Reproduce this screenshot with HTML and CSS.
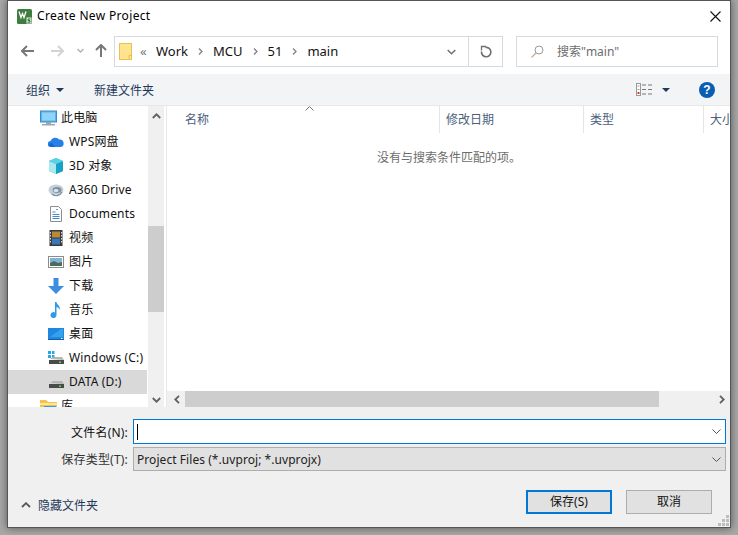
FILE: index.html
```html
<!DOCTYPE html>
<html lang="zh">
<head>
<meta charset="utf-8">
<title>Create New Project</title>
<link rel="stylesheet" href="styles.css">
</head>
<body>
<div class="window">
  <header class="titlebar">
    <svg class="app-icon" width="15" height="15" viewBox="0 0 15 15"><rect width="15" height="15" rx="1.5" fill="#3f7d3f"/><path d="M2 2.500l2 6 1.500-4 1.500 4 2-6" fill="none" stroke="#fff" stroke-width="1.3"/><rect x="9.500" y="8.500" width="5" height="6" fill="#e8efe8"/><path d="M13.500 10h-2.500v1.600h2v1.600h-2.400" fill="none" stroke="#2f6b2f"/></svg>
    <span class="title">Create New Project</span>
    <svg class="close" width="11" height="11" viewBox="0 0 11 11"><path d="M.5.5l10 10M10.500.5l-10 10" stroke="#111" stroke-width="1.1"/></svg>
  </header>

  <nav class="navbar">
    <svg class="nav-back" width="13" height="12" viewBox="0 0 13 12"><path d="M6 1L1 6l5 5M1 6h12" fill="none" stroke="#777" stroke-width="2"/></svg>
    <svg class="nav-forward" width="13" height="12" viewBox="0 0 13 12"><path d="M7 1l5 5-5 5M12 6H0" fill="none" stroke="#d4d4d4" stroke-width="2"/></svg>
    <svg class="nav-drop" width="7" height="5" viewBox="0 0 7 5"><path d="M.5 1l3 3 3-3" fill="none" stroke="#b0b0b0" stroke-width="1.3"/></svg>
    <svg class="nav-up" width="12" height="13" viewBox="0 0 12 13"><path d="M1 6l5-5 5 5M6 1v12" fill="none" stroke="#777" stroke-width="2"/></svg>
    <div class="address">
      <svg class="addr-folder" width="13" height="17" viewBox="0 0 13 17"><rect x=".5" y=".5" width="12" height="16" fill="#ffe38f" stroke="#e6c34f"/><path d="M10 16.500v-4h2.500" fill="none" stroke="#e6c34f"/></svg>
      <span class="crumb-more">«</span>
      <span class="crumb">Work</span>
      <svg class="sep" width="5" height="7" viewBox="0 0 5 7"><path d="M1 .5l3 3-3 3" fill="none" stroke="#808080" stroke-width="1.3"/></svg>
      <span class="crumb">MCU</span>
      <svg class="sep" width="5" height="7" viewBox="0 0 5 7"><path d="M1 .5l3 3-3 3" fill="none" stroke="#808080" stroke-width="1.3"/></svg>
      <span class="crumb">51</span>
      <svg class="sep" width="5" height="7" viewBox="0 0 5 7"><path d="M1 .5l3 3-3 3" fill="none" stroke="#808080" stroke-width="1.3"/></svg>
      <span class="crumb">main</span>
      <svg class="addr-drop" width="9" height="6" viewBox="0 0 9 6"><path d="M.7 1l3.800 3.800L8.300 1" fill="none" stroke="#707070" stroke-width="1.5"/></svg>
      <div class="refresh"><svg width="12" height="13" viewBox="0 0 12 13"><path d="M5.500 2.400A4.700 4.700 0 1 1 1.500 6.500" fill="none" stroke="#707070" stroke-width="1.600"/><path d="M1.500 5.500V1.500H6" fill="none" stroke="#707070" stroke-width="1.300"/></svg></div>
    </div>
    <div class="search">
      <svg width="13" height="13" viewBox="0 0 13 13"><circle cx="8" cy="5" r="4" fill="none" stroke="#9a9a9a"/><path d="M5 8l-4.500 4.500" stroke="#c9a88a" stroke-width="1.100"/></svg>
      <span class="search-text">搜索"main"</span>
    </div>
  </nav>

  <div class="toolbar">
    <span class="tool">组织</span>
    <span class="tri tri-org"></span>
    <span class="tool tool-new">新建文件夹</span>
    <svg class="view-icon" width="17" height="13" viewBox="0 0 17 13"><rect x=".5" y=".5" width="4" height="12" fill="#fff" stroke="#9a9a9a"/><path d="M1.500 3h2M1.500 6.500h2" stroke="#9a9a9a"/><rect x="1.500" y="9" width="2" height="2" fill="#d33"/><path d="M6 2h4M12 2h4M6 6.500h4M12 6.500h4M6 11h4M12 11h4" stroke="#777"/></svg>
    <span class="tri tri-view"></span>
    <svg class="help" width="16" height="16" viewBox="0 0 16 16"><circle cx="8" cy="8" r="8" fill="#0a5eb0"/><text x="8" y="12.300" text-anchor="middle" class="help-mark">?</text></svg>
  </div>

  <main class="main">
    <aside class="sidebar">
      <ul class="tree">
        <li class="row">
          <svg width="17" height="16" viewBox="0 0 17 16"><rect x=".5" y="1" width="16" height="11" fill="#58b4ee" stroke="#3d8cc4"/><rect x="2" y="2.500" width="13" height="8" fill="#8fd3f7"/><rect x="6" y="12" width="5" height="2" fill="#9aa8b4"/><rect x="2" y="14" width="13" height="1.500" fill="#9aa8b4"/></svg>
          <span>此电脑</span>
        </li>
        <li class="row child">
          <svg width="16" height="16" viewBox="0 0 16 16"><path d="M3 13a3 3 0 0 1-.500-6A5 5 0 0 1 11 5.500a3.800 3.800 0 0 1 1.500 7.500z" fill="#2680e8"/><path d="M1 11a3 3 0 0 1 3-2l3 4H3z" fill="#1666cc"/></svg>
          <span>WPS网盘</span>
        </li>
        <li class="row child">
          <svg width="16" height="16" viewBox="0 0 16 16"><path d="M8 0l7 3v10l-7 3-7-3V3z" fill="#2fb8d6"/><path d="M1 3l7 3v10l-7-3z" fill="#a8e8ee"/><path d="M8 6l7-3v10l-7 3z" fill="#17a2c4"/><path d="M1 3l7-3 7 3-7 3z" fill="#5cd0e4"/></svg>
          <span>3D 对象</span>
        </li>
        <li class="row child">
          <svg width="16" height="16" viewBox="0 0 16 16"><ellipse cx="8" cy="8" rx="7.500" ry="5.500" fill="#c5d0d8"/><ellipse cx="9" cy="8" rx="4.500" ry="3" fill="#7f93a6"/><ellipse cx="8" cy="8.500" rx="2.500" ry="1.500" fill="#e0e6ea"/><path d="M4 12c3 3 8 2 10-2" fill="none" stroke="#7f8f9c" stroke-width="1.200"/></svg>
          <span>A360 Drive</span>
        </li>
        <li class="row child">
          <svg width="16" height="16" viewBox="0 0 16 16"><path d="M2.500.5h8l3 3v12h-11z" fill="#fff" stroke="#8c8c8c"/><path d="M4.500 6h3M4.500 8.500h7M4.500 10.500h7M4.500 12.500h7" stroke="#3d8fd0"/><path d="M8 3.500h2" stroke="#5ab"/></svg>
          <span>Documents</span>
        </li>
        <li class="row child">
          <svg width="16" height="16" viewBox="0 0 16 16"><rect x="1.500" y="0" width="13" height="16" fill="#3a3a3a"/><rect x="4" y="1.500" width="8" height="6" fill="#b98a3a"/><rect x="4" y="8.500" width="8" height="6" fill="#3b78b8"/><path d="M2.500 2v12M13.500 2v12" stroke="#ddd" stroke-dasharray="1.500 1.500"/></svg>
          <span>视频</span>
        </li>
        <li class="row child">
          <svg width="16" height="16" viewBox="0 0 16 16"><rect x=".5" y="2.500" width="15" height="11" fill="#fff" stroke="#8c8c8c"/><rect x="2" y="4" width="12" height="8" fill="#7fb3d8"/><path d="M2 9l4-2 4 2 4-1v4H2z" fill="#4d6b58"/></svg>
          <span>图片</span>
        </li>
        <li class="row child">
          <svg width="16" height="16" viewBox="0 0 16 16"><path d="M5.500 0h5v8H16l-8 8-8-8h5.500z" fill="#3b8ee0"/></svg>
          <span>下载</span>
        </li>
        <li class="row child">
          <svg width="16" height="16" viewBox="0 0 16 16"><path d="M7 0h1.500c.3 3 4.500 4 3 8-.3-2-2-3-3-3v8a3 3 0 1 1-1.500-2.500z" fill="#2c9be8"/></svg>
          <span>音乐</span>
        </li>
        <li class="row child">
          <svg width="16" height="16" viewBox="0 0 16 16"><rect y="2" width="16" height="11" fill="#1e88e0"/><path d="M0 13h16v1H0z" fill="#0f5ea8"/><path d="M2 11L13 3h2v8z" fill="#39a0ee"/><rect x="13" y="12" width="1.500" height="1" fill="#fff"/></svg>
          <span>桌面</span>
        </li>
        <li class="row child">
          <svg width="16" height="16" viewBox="0 0 16 16"><path d="M0 1h3v3H0zM4 1h2.500v3H4zM0 5h3v3H0zM4 5h2.500v3H4z" fill="#28a8e8"/><path d="M2 9L5 7h9l2 3z" fill="#b5b5b5"/><rect x="1" y="10" width="15" height="4" fill="#4a4a4a"/><rect x="11" y="11.500" width="2" height="1.500" fill="#4be04b"/></svg>
          <span>Windows (C:)</span>
        </li>
        <li class="row child selected">
          <svg width="16" height="16" viewBox="0 0 16 16"><path d="M2 9L5 7h9l2 3z" fill="#b5b5b5"/><rect x="1" y="10" width="15" height="4" fill="#4a4a4a"/><rect x="11" y="11.500" width="2" height="1.500" fill="#4be04b"/></svg>
          <span>DATA (D:)</span>
        </li>
        <li class="row">
          <svg width="17" height="16" viewBox="0 0 17 16"><path d="M0 2h6l2 2h9v12H0z" fill="#f4c14e"/><rect x="0" y="5" width="17" height="2" fill="#fbe6a6"/><rect x="4" y="8" width="12" height="8" fill="#3e9ae0"/></svg>
          <span>库</span>
        </li>
      </ul>
      <div class="vscroll">
        <svg class="scroll-arrow" width="9" height="6" viewBox="0 0 9 6"><path d="M.8 5l3.700-3.700L8.200 5" fill="none" stroke="#606060" stroke-width="1.800"/></svg>
        <div class="vtrack"><div class="vthumb"></div></div>
        <svg class="scroll-arrow scroll-arrow-down" width="9" height="6" viewBox="0 0 9 6"><path d="M.8 1l3.700 3.700L8.200 1" fill="none" stroke="#606060" stroke-width="1.800"/></svg>
      </div>
    </aside>

    <section class="content">
      <div class="columns">
        <div class="col col-name">名称<svg class="sort" width="9" height="5" viewBox="0 0 9 5"><path d="M.5 4.500l4-4 4 4" fill="none" stroke="#7a7a7a"/></svg></div>
        <div class="col col-date">修改日期</div>
        <div class="col col-type">类型</div>
        <div class="col col-size">大小</div>
      </div>
      <div class="list"><p class="empty">没有与搜索条件匹配的项。</p></div>
      <div class="hscroll">
        <svg width="6" height="9" viewBox="0 0 6 9"><path d="M5 .8L1.300 4.500 5 8.200" fill="none" stroke="#606060" stroke-width="1.800"/></svg>
        <div class="htrack"><div class="hthumb"></div></div>
        <svg width="6" height="9" viewBox="0 0 6 9"><path d="M1 .8l3.700 3.700L1 8.200" fill="none" stroke="#606060" stroke-width="1.800"/></svg>
      </div>
    </section>
  </main>

  <footer class="panel">
    <div class="form">
      <label class="label label-name">文件名(N):</label>
      <div class="field field-active"><span class="caret"></span><svg width="9" height="5" viewBox="0 0 9 5"><path d="M.5.500l4 4 4-4" fill="none" stroke="#555"/></svg></div>
      <label class="label label-type">保存类型(T):</label>
      <div class="field field-select"><span>Project Files (*.uvproj; *.uvprojx)</span><svg width="9" height="5" viewBox="0 0 9 5"><path d="M.5.500l4 4 4-4" fill="none" stroke="#555"/></svg></div>
    </div>
    <div class="actions">
      <svg class="hide-chevron" width="10" height="6" viewBox="0 0 10 6"><path d="M1 5l4-3.800L9 5" fill="none" stroke="#555" stroke-width="1.800"/></svg>
      <span class="hide-label">隐藏文件夹</span>
      <button class="btn btn-primary">保存(S)</button>
      <button class="btn">取消</button>
    </div>
    <svg class="grip" width="11" height="11" viewBox="0 0 11 11"><path d="M8 0h3v3H8zM4 4h3v3H4zM8 4h3v3H8zM0 8h3v3H0zM4 8h3v3H4zM8 8h3v3H8z" fill="#bdbdbd"/></svg>
  </footer>
</div>
</body>
</html>
```

FILE: styles.css
```css
* { box-sizing: border-box; }
html, body { margin: 0; padding: 0; }
body {
  width: 738px;
  height: 535px;
  overflow: hidden;
  background: #a8a8a8;
  font-family: "Noto Sans", "Noto Sans CJK SC", sans-serif;
  font-size: 12px;
  color: #000;
}
svg { display: block; flex: none; }

.window {
  position: relative;
  width: 724px;
  height: 528px;
  margin-left: 7px;
  background: #fff;
  border: 1px solid #555;
  box-shadow: 0 0 8px rgba(0, 0, 0, .5);
  display: flex;
  flex-direction: column;
}

.titlebar {
  height: 31px;
  padding: 0 9px;
  display: flex;
  align-items: center;
  flex: none;
}
.title { margin: 0 0 2px 5px; letter-spacing: .34px; }
.close { margin-left: auto; margin-right: 0; }

.navbar {
  height: 42px;
  flex: none;
  padding: 4px 0 0 13px;
  display: flex;
  align-items: flex-start;
}
.nav-back { margin-top: 9px; }
.nav-forward { margin: 9px 0 0 17px; }
.nav-drop { margin: 12px 0 0 13px; }
.nav-up { margin: 8px 0 0 11px; }
.address {
  width: 389px;
  height: 31px;
  margin-left: 7px;
  border: 1px solid #d9d9d9;
  display: flex;
  align-items: center;
  padding-left: 4px;
  font-size: 13px;
}
.crumb-more { margin: 0 0 2px 8px; color: #777; width: 16px; }
.crumb { color: #111; margin-bottom: 2px; }
.sep { margin: 0 10px; }
.addr-drop { margin-left: auto; margin-right: 12px; }
.refresh {
  width: 34px;
  height: 100%;
  border-left: 1px solid #d9d9d9;
  display: flex;
  align-items: center;
  justify-content: center;
}
.search {
  width: 202px;
  height: 31px;
  margin-left: 13px;
  border: 1px solid #d9d9d9;
  display: flex;
  align-items: center;
  padding-left: 14px;
  gap: 13px;
  color: #6d6d6d;
}
.search-text { margin-bottom: 2px; }

.toolbar {
  height: 31px;
  flex: none;
  background: #f3f4f6;
  padding-left: 18px;
  display: flex;
  align-items: center;
  color: #1e395b;
}
.tri {
  width: 0;
  height: 0;
  border-left: 4px solid transparent;
  border-right: 4px solid transparent;
  border-top: 4px solid #1e395b;
}
.tri-org { margin-left: 6px; }
.tool-new { margin-left: 30px; }
.view-icon { margin-left: 482px; }
.tri-view { margin-left: 9px; }
.help { margin-left: 29px; }
.help-mark { font: bold 12px "Liberation Sans", sans-serif; fill: #fff; }

.main {
  height: 302px;
  flex: none;
  display: flex;
  border-top: 1px solid #e8e8e8;
  overflow: hidden;
}
.sidebar {
  width: 159px;
  flex: none;
  display: flex;
  border-right: 1px solid #e8e8e8;
  padding-right: 3px;
}
.tree {
  width: 139px;
  flex: none;
  margin: 0;
  padding: 0;
  list-style: none;
  overflow: hidden;
}
.row {
  height: 24px;
  display: flex;
  align-items: center;
  padding-left: 32px;
  gap: 4px;
  color: #111;
  letter-spacing: .15px;
}
.row span { margin-bottom: 2px; }
.row.child { padding-left: 40px; gap: 5px; }
.row.selected { background: #d9d9d9; }
.vscroll {
  width: 16px;
  flex: none;
  margin-left: 1px;
  background: #f0f0f0;
  display: flex;
  flex-direction: column;
  align-items: center;
}
.scroll-arrow { margin: 7px 0; }
.scroll-arrow-down { margin: 7px 0 4px; }
.vtrack { flex: 1; width: 100%; }
.vthumb { width: 100%; height: 86px; margin-top: 100px; background: #cdcdcd; }

.content {
  flex: 1;
  min-width: 0;
  display: flex;
  flex-direction: column;
}
.columns {
  height: 27px;
  flex: none;
  display: flex;
  color: #4c607a;
}
.col {
  position: relative;
  height: 100%;
  padding: 0 0 2px 6px;
  display: flex;
  align-items: center;
  border-right: 1px solid #e5e5e5;
}
.col-name { width: 273px; padding-left: 18px; }
.col-date { width: 144px; }
.col-type { width: 120px; }
.col-size { flex: 1; border-right: 0; overflow: hidden; white-space: nowrap; }
.sort { position: absolute; left: 138px; top: 0; }
.list { flex: 1; }
.empty {
  margin: 15px 0 0;
  width: 564px;
  text-align: center;
  color: #6d6d6d;
}
.hscroll {
  height: 16px;
  flex: none;
  background: #f0f0f0;
  display: flex;
  align-items: center;
  padding: 0 5px 0 7px;
}
.htrack { flex: 1; height: 100%; padding: 0 60px 0 5px; }
.hthumb { width: 100%; height: 100%; background: #cdcdcd; }

.panel {
  position: relative;
  flex: 1;
  background: #f0f0f0;
  padding: 12px 4px 0 0;
}
.form {
  display: grid;
  grid-template-columns: 125px 1fr;
  row-gap: 3px;
  align-items: center;
}
.label { text-align: right; padding-right: 5px; color: #111; letter-spacing: .2px; }
.label-type { color: #333; }
.field {
  height: 25px;
  display: flex;
  align-items: center;
  justify-content: space-between;
  padding: 0 4px 0 3px;
}
.field-active { background: #fff; border: 1px solid #0078d7; }
.field-select { height: 24px; background: #e1e1e1; border: 1px solid #adadad; color: #222; letter-spacing: .06px; }
.caret { width: 1px; height: 16px; background: #000; }
.actions {
  margin-top: 19px;
  padding-left: 13px;
  display: flex;
  align-items: center;
  padding-right: 14px;
}
.hide-chevron { margin: 5px 7px 0 0; }
.hide-label { color: #1e395b; margin: 5px auto 0 0; }
.btn {
  width: 86px;
  height: 24px;
  margin-left: 14px;
  padding: 0 0 2px;
  background: #e1e1e1;
  border: 1px solid #adadad;
  border-radius: 0;
  font: inherit;
  color: #111;
}
.btn-primary { border: 2px solid #0078d7; }
.grip { position: absolute; right: 1px; bottom: 1px; }
```
